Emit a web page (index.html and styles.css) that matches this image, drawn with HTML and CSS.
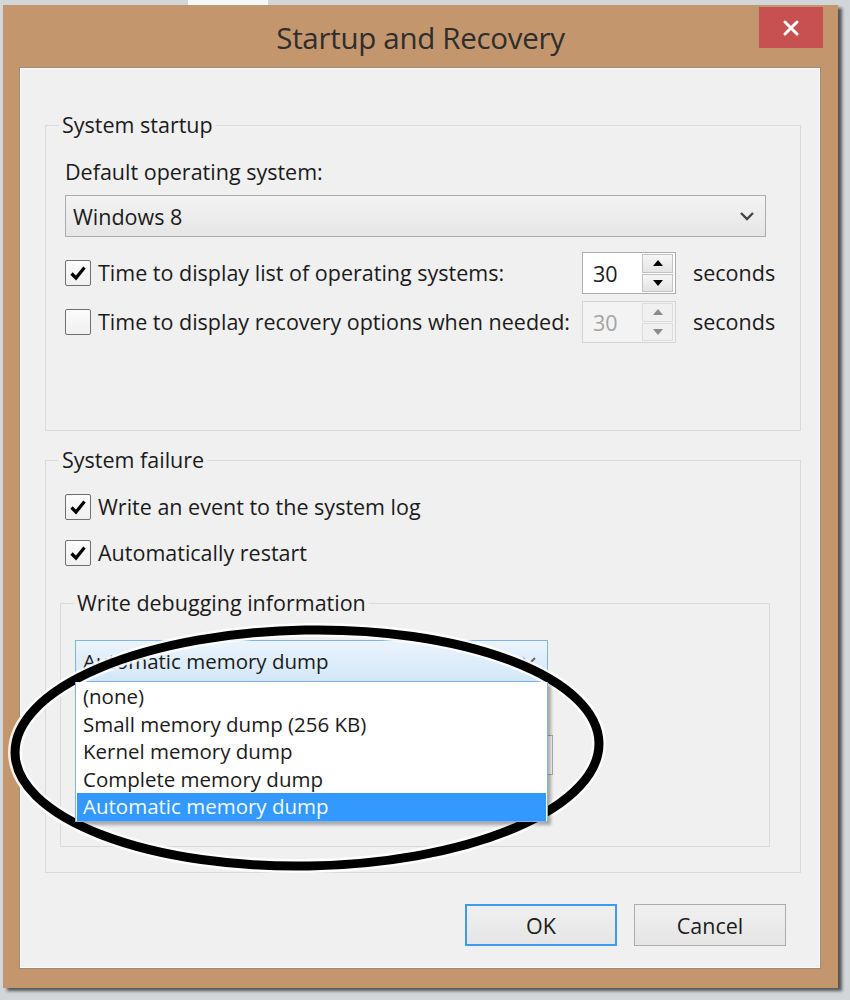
FILE: index.html
```html
<!DOCTYPE html>
<html>
<head>
<meta charset="utf-8">
<title>Startup and Recovery</title>
<link rel="stylesheet" href="styles.css">
</head>
<body>
<div class="screen">
  <div class="topstrip"><span class="strip-tab"></span></div>
  <div class="window">
    <div class="titlebar">
      <span></span>
      <div class="title">Startup and Recovery</div>
      <div class="close">
        <svg width="20" height="20" viewBox="0 0 20 20"><path d="M4 4 L16 16 M16 4 L4 16" stroke="#fff" stroke-width="3" stroke-linecap="round"/></svg>
      </div>
    </div>
    <div class="client">
      <fieldset class="group g1">
        <legend>System startup</legend>
        <div class="g1-body">
          <div class="label">Default operating system:</div>
          <div class="combo">
            <span class="combo-text">Windows 8</span>
            <svg class="chev" width="16" height="12" viewBox="0 0 16 12"><path d="M2 3 L8 9 L14 3" fill="none" stroke="#444" stroke-width="2.4"/></svg>
          </div>
          <div class="timerow first">
            <div class="check">
              <span class="box"><svg width="20" height="20" viewBox="0 0 20 20"><path d="M3.5 10.5 L8 15 L16.5 4.5" fill="none" stroke="#000" stroke-width="3.2"/></svg></span>
              <span>Time to display list of operating systems:</span>
            </div>
            <div class="spin">
              <span class="spin-val">30</span>
              <span class="spin-btns">
                <span class="sb up"><svg width="12" height="8" viewBox="0 0 12 8"><path d="M1 7 L6 1 L11 7 Z" fill="#000"/></svg></span>
                <span class="sb dn"><svg width="12" height="8" viewBox="0 0 12 8"><path d="M1 1 L6 7 L11 1 Z" fill="#000"/></svg></span>
              </span>
            </div>
            <span class="unit">seconds</span>
          </div>
          <div class="timerow second">
            <div class="check">
              <span class="box"></span>
              <span>Time to display recovery options when needed:</span>
            </div>
            <div class="spin disabled">
              <span class="spin-val">30</span>
              <span class="spin-btns">
                <span class="sb up"><svg width="12" height="8" viewBox="0 0 12 8"><path d="M1 7 L6 1 L11 7 Z" fill="#8a8a8a"/></svg></span>
                <span class="sb dn"><svg width="12" height="8" viewBox="0 0 12 8"><path d="M1 1 L6 7 L11 1 Z" fill="#8a8a8a"/></svg></span>
              </span>
            </div>
            <span class="unit">seconds</span>
          </div>
        </div>
      </fieldset>

      <fieldset class="group g2">
        <legend>System failure</legend>
        <div class="g2-body">
          <div class="check crow first">
            <span class="box"><svg width="20" height="20" viewBox="0 0 20 20"><path d="M3.5 10.5 L8 15 L16.5 4.5" fill="none" stroke="#000" stroke-width="3.2"/></svg></span>
            <span>Write an event to the system log</span>
          </div>
          <div class="check crow second">
            <span class="box"><svg width="20" height="20" viewBox="0 0 20 20"><path d="M3.5 10.5 L8 15 L16.5 4.5" fill="none" stroke="#000" stroke-width="3.2"/></svg></span>
            <span>Automatically restart</span>
          </div>
          <fieldset class="group g3">
            <legend>Write debugging information</legend>
            <div class="g3-body">
              <div class="combo-wrap">
                <div class="combo open">
                  <span class="combo-text">Automatic memory dump</span>
                  <svg class="chev" width="16" height="12" viewBox="0 0 16 12"><path d="M2 3 L8 9 L14 3" fill="none" stroke="#666" stroke-width="2"/></svg>
                </div>
                <ul class="droplist">
                  <li>(none)</li>
                  <li>Small memory dump (256 KB)</li>
                  <li>Kernel memory dump</li>
                  <li>Complete memory dump</li>
                  <li class="sel">Automatic memory dump</li>
                </ul>
              </div>
              <div class="dumpbox"></div>
            </div>
          </fieldset>
        </div>
      </fieldset>

      <div class="buttons">
        <button class="btn default">OK</button>
        <button class="btn">Cancel</button>
      </div>
    </div>
  </div>
  <svg class="mark" width="850" height="1000" viewBox="0 0 850 1000">
    <ellipse cx="307" cy="748" rx="292" ry="118" fill="none" stroke="#fff" stroke-width="14" stroke-opacity="0.85" transform="rotate(-1 307 748)"/>
    <ellipse cx="307" cy="748" rx="292" ry="118" fill="none" stroke="#000" stroke-width="9" transform="rotate(-1 307 748)"/>
  </svg>
</div>
</body>
</html>
```

FILE: styles.css
```css
* { box-sizing: border-box; }
body {
  margin: 0;
  font-family: "Open Sans", "Noto Sans", "DejaVu Sans", sans-serif;
  font-size: 21.5px;
  color: #1b1b1b;
}
.screen {
  width: 850px;
  height: 1000px;
  background: #d3d6d9;
  position: relative;
  overflow: hidden;
}
.topstrip {
  height: 5px;
  display: flex;
}
.strip-tab {
  margin-left: 188px;
  width: 80px;
  background: #f7f7f7;
}
.window {
  margin-left: 3px;
  width: 835px;
  height: 983px;
  background: #c4966d;
  box-shadow: 4px 3px 3px rgba(0, 0, 0, 0.6);
  display: flex;
  flex-direction: column;
}
.titlebar {
  height: 63px;
  display: grid;
  grid-template-columns: 1fr auto 1fr;
  align-items: start;
}
.title {
  font-size: 29.5px;
  line-height: 34px;
  padding-top: 16px;
  color: #2e2e2e;
  letter-spacing: -0.3px;
}
.close {
  justify-self: end;
  margin-top: 2px;
  margin-right: 15px;
  width: 64px;
  height: 41px;
  background: #c75050;
  display: flex;
  align-items: center;
  justify-content: center;
}
.client {
  margin: 0 18px 0 17px;
  height: 900px;
  background: #f0f0f0;
  border: 1px solid #fbfbfb;
  box-shadow: 0 0 0 1px #a08a74;
  padding: 43px 18px 0 24px;
  position: relative;
}
.group {
  margin: 0;
  padding: 0;
  min-width: 0;
  border: 1px solid #dadada;
}
.group legend {
  padding: 0 3px;
  margin-left: 13px;
  line-height: 26px;
}
.g1-body {
  padding: 21px 34px 87px 19px;
}
.label {
  line-height: 26px;
}
.combo {
  margin-top: 10px;
  height: 42px;
  border: 1px solid #acacac;
  background: linear-gradient(#f3f3f3, #e6e6e6);
  display: flex;
  align-items: center;
  justify-content: space-between;
  padding: 0 10px 0 7px;
}
.timerow {
  display: grid;
  grid-template-columns: 500px 94px auto;
  column-gap: 17px;
  align-items: center;
  height: 42px;
}
.timerow.first { margin-top: 15px; }
.timerow.second { margin-top: 7px; }
.check {
  display: flex;
  align-items: center;
  gap: 7px;
  line-height: 26px;
  white-space: nowrap;
}
.box {
  width: 26px;
  height: 26px;
  border: 1px solid #707070;
  border-radius: 2px;
  background: linear-gradient(#fcfcfc, #f0f0f0);
  display: flex;
  align-items: center;
  justify-content: center;
  flex: none;
}
.spin {
  height: 42px;
  border: 1px solid #abadb3;
  background: #fff;
  display: flex;
  align-items: stretch;
}
.spin-val {
  flex: 1;
  padding-left: 10px;
  display: flex;
  align-items: center;
}
.spin-btns {
  width: 33px;
  padding: 1px 2px 1px 0;
  display: flex;
  flex-direction: column;
  gap: 1px;
}
.sb {
  flex: 1;
  border: 1px solid #c2c2c2;
  background: linear-gradient(#f6f6f6, #e4e4e4);
  display: flex;
  align-items: center;
  justify-content: center;
}
.spin.disabled {
  border-color: #d4d4d4;
  background: #f3f3f3;
  color: #a3a3a3;
}
.spin.disabled .sb {
  border-color: #dcdcdc;
  background: #f0f0f0;
}
.unit { line-height: 26px; }

.g2 { margin-top: 16px; }
.g2-body {
  padding: 21px 30px 25px 14px;
}
.crow { margin-left: 5px; }
.crow.second { margin-top: 20px; }
.g3 { margin-top: 24px; }
.g3-body {
  padding: 24px 14px 0 14px;
  height: 230px;
}
.combo-wrap {
  position: relative;
  width: 473px;
}
.combo.open {
  margin-top: 0;
  font-size: 20.5px;
  border-color: #7eb4ea;
  background: linear-gradient(#ebf4fc, #d3e7f9);
}
.chev { flex: none; }
.droplist {
  position: absolute;
  left: 0;
  top: 42px;
  width: 473px;
  margin: 0;
  padding: 1px 1px 0 1px;
  list-style: none;
  font-size: 20.5px;
  background: #fff;
  border: 1px solid #7eb4ea;
  border-top: none;
  box-shadow: 3px 3px 3px rgba(0, 0, 0, 0.3);
  z-index: 2;
}
.droplist li {
  height: 27.5px;
  line-height: 27.5px;
  padding-left: 6px;
  white-space: nowrap;
}
.droplist li.sel {
  background: #3399ff;
  color: #f4f9ff;
}
.dumpbox {
  margin-top: 53px;
  width: 478px;
  height: 40px;
  border: 1px solid #abadb3;
  background: #fff;
}
.buttons {
  margin-top: 31px;
  display: flex;
  justify-content: flex-end;
  gap: 17px;
  padding-right: 15px;
}
.btn {
  width: 152px;
  height: 42px;
  font: inherit;
  color: #1b1b1b;
  border: 1px solid #acacac;
  background: linear-gradient(#f0f0f0, #e5e5e5);
  padding: 0;
}
.btn.default {
  border: 2px solid #3c9bef;
}
.mark {
  position: absolute;
  left: 0;
  top: 0;
  pointer-events: none;
}
```
